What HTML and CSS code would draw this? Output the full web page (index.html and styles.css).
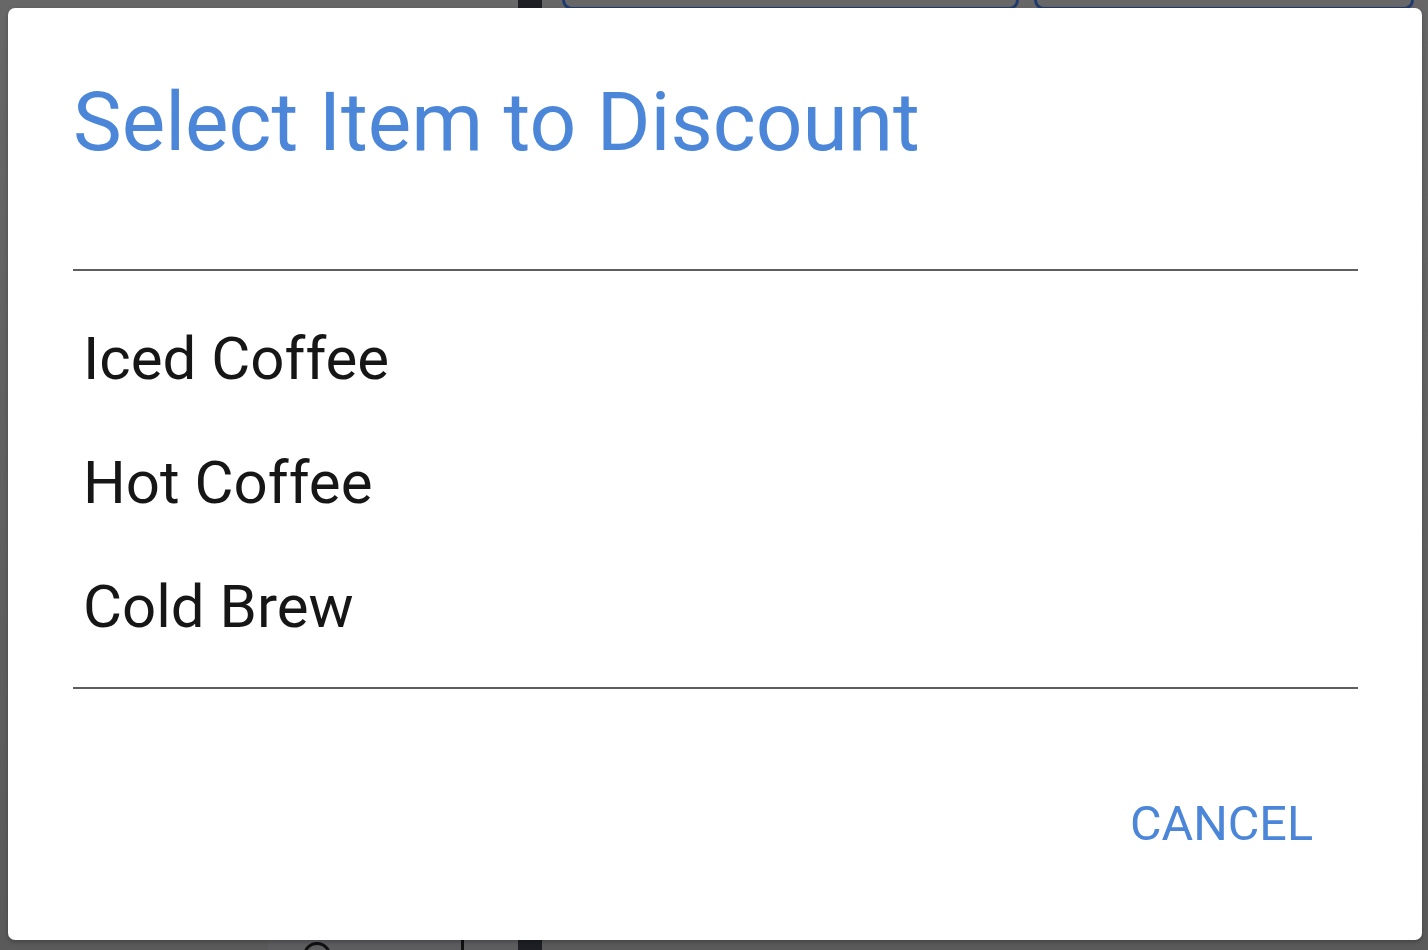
FILE: index.html
```html
<!DOCTYPE html>
<html lang="en">
<head>
    <meta charset="UTF-8">
    <meta name="viewport" content="width=device-width, initial-scale=1.0">
    <title>Select Item to Discount</title>
    <link rel="stylesheet" href="styles.css">
</head>
<body>
    <!-- App behind the modal, mostly hidden -->
    <div class="backdrop">
        <div class="top-strip">
            <div class="dark-block"></div>
            <div class="btn-ghost wide"></div>
            <div class="btn-ghost"></div>
        </div>
        <div class="bottom-strip">
            <div class="light-panel">
                <div class="peek-ring"></div>
                <div class="peek-line"></div>
            </div>
            <div class="dark-block"></div>
        </div>
    </div>

    <div class="dialog">
        <h1 class="dialog-title">Select Item to Discount</h1>
        <ul class="item-list">
            <li>Iced Coffee</li>
            <li>Hot Coffee</li>
            <li>Cold Brew</li>
        </ul>
        <div class="dialog-actions">
            <button type="button">CANCEL</button>
        </div>
    </div>
</body>
</html>
```

FILE: styles.css
```css
/* Basic Reset */
* {
    margin: 0;
    padding: 0;
    box-sizing: border-box;
}

body {
    font-family: Roboto, "Noto Sans", Arial, sans-serif;
    background: linear-gradient(#676767, #5a5a5b);
    width: 1428px;
    height: 950px;
    overflow: hidden;
}

/* Backdrop */
.backdrop {
    height: 950px;
    display: flex;
    flex-direction: column;
    justify-content: space-between;
}

.top-strip {
    display: flex;
    height: 10px;
    padding-left: 518px;
    gap: 20px;
}

.dark-block {
    width: 24px;
    height: 100%;
    background-color: #1e1f24;
}

.btn-ghost {
    width: 380px;
    border: 3px solid #1f3b6e;
    border-top: none;
    border-radius: 0 0 10px 10px;
}

.btn-ghost.wide {
    width: 457px;
    margin-right: -5px;
}

.bottom-strip {
    display: flex;
    height: 12px;
    padding-left: 268px;
}

.light-panel {
    width: 250px;
    background-color: #5d5d5f;
    overflow: hidden;
    display: flex;
}

.peek-ring {
    flex: none;
    width: 28px;
    height: 28px;
    margin: 4px 0 0 35px;
    border: 3px solid #111;
    border-radius: 50%;
}

.peek-line {
    width: 3px;
    margin-left: 130px;
    background-color: #111;
}

/* Dialog */
.dialog {
    position: absolute;
    top: 8px;
    left: 8px;
    width: 1414px;
    height: 932px;
    background-color: #fff;
    border-radius: 7px;
    box-shadow: 0 2px 4px rgba(0, 0, 0, 0.25);
    padding: 0 64px 0 65px;
    display: flex;
    flex-direction: column;
}

.dialog-title {
    font-size: 82px;
    font-weight: 400;
    line-height: 82px;
    color: #4b86d9;
    margin-top: 73px;
    margin-bottom: 106px;
}

.item-list {
    list-style: none;
    border-top: 2px solid #5e5e5e;
    border-bottom: 2px solid #5e5e5e;
    padding: 26px 0 18px;
}

.item-list li {
    font-size: 60px;
    line-height: 124px;
    height: 124px;
    color: #161616;
    padding-left: 10px;
}

.dialog-actions {
    display: flex;
    justify-content: flex-end;
    padding-top: 110px;
    padding-right: 45px;
}

.dialog-actions button {
    font-family: inherit;
    font-size: 48.5px;
    line-height: 49px;
    color: #4b86d9;
    background: none;
    border: none;
    cursor: pointer;
}
```
